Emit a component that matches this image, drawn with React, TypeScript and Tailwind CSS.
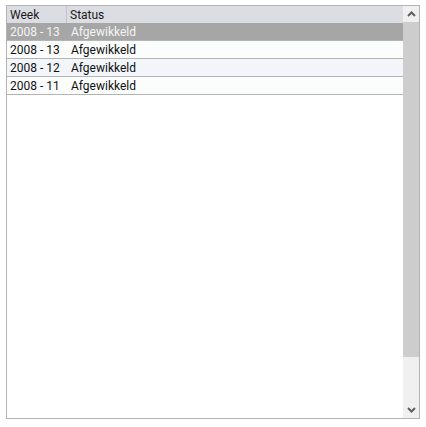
import React from "react";

const rows = [
  { week: "2008 - 13", status: "Afgewikkeld", selected: true },
  { week: "2008 - 13", status: "Afgewikkeld", bg: "bg-[#fbfdfd]" },
  { week: "2008 - 12", status: "Afgewikkeld", bg: "bg-[#f2f6fa]" },
  { week: "2008 - 11", status: "Afgewikkeld", bg: "bg-[#fbfdfd]" },
];

export default function App() {
  return (
    <div className="w-[426px] h-[427px] bg-white pl-[6px] pt-[5px] text-[12px] leading-none" style={{ fontFamily: "Roboto, 'Noto Sans', sans-serif" }}>
      <div className="flex w-[414px] h-[414px] border border-[#b4b4b4] bg-white">
        <div className="flex-1 flex flex-col">
          <div className="flex h-[17px] bg-[#dcdde2] text-[#1a1a1a]">
            <div className="w-[60px] pl-[3px] flex items-center border-r border-[#c4c5ca]">Week</div>
            <div className="flex-1 pl-[3px] flex items-center">Status</div>
          </div>
          {rows.map((r, i) => (
            <div
              key={i}
              className={
                r.selected
                  ? "flex h-[18px] bg-[#a6a6a6] text-[#f4f4f4] border-b border-[#b4b4b4]"
                  : `flex h-[18px] ${r.bg} text-[#111] border-b border-[#b4b4b4]`
              }
            >
              <div className="w-[61px] pl-[3px] flex items-center">{r.week}</div>
              <div className="flex-1 pl-[3px] flex items-center">{r.status}</div>
            </div>
          ))}
        </div>
        <div className="w-[16px] flex flex-col bg-[#f0f0f0]">
          <div className="h-[16px] flex items-center justify-center">
            <svg width="9" height="6" viewBox="0 0 9 6">
              <path d="M1 5 L4.5 1.5 L8 5" fill="none" stroke="#606060" strokeWidth="2" />
            </svg>
          </div>
          <div className="h-[335px] mx-[0px] bg-[#cdcdcd]" />
          <div className="flex-1" />
          <div className="h-[16px] flex items-center justify-center">
            <svg width="9" height="6" viewBox="0 0 9 6">
              <path d="M1 1 L4.5 4.5 L8 1" fill="none" stroke="#606060" strokeWidth="2" />
            </svg>
          </div>
        </div>
      </div>
    </div>
  );
}
